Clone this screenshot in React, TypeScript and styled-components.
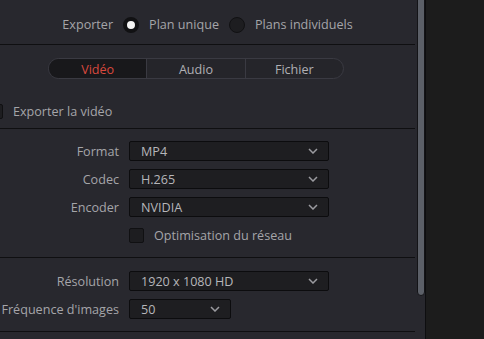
import styled, { createGlobalStyle } from "styled-components";

const GlobalStyle = createGlobalStyle`
  html, body {
    margin: 0;
    padding: 0;
    background: #1c1c1c;
  }
  body {
    font-family: "Open Sans", "Noto Sans", sans-serif;
    font-size: 12.6px;
    color: #a8a8ac;
  }
`;

const Window = styled.div`
  display: flex;
  width: 484px;
  height: 339px;
  overflow: hidden;
  background: #1c1c1c;
`;

const Panel = styled.div`
  display: flex;
  width: 426px;
  flex-shrink: 0;
  background: #28282e;
  border-right: 1px solid #0e0e10;
  box-sizing: border-box;
`;

const Content = styled.div`
  width: 415px;
  flex-shrink: 0;
  overflow: hidden;
`;

const ScrollTrack = styled.div`
  margin-left: 2px;
  width: 8px;
  position: relative;
`;

const Thumb = styled.div`
  position: absolute;
  top: -6px;
  left: 0;
  width: 8px;
  height: 302px;
  box-sizing: border-box;
  background: #5c6068;
  border: 1px solid #141417;
  border-radius: 4px;
`;

const HeaderRow = styled.div`
  display: flex;
  align-items: center;
  justify-content: center;
  gap: 10px;
  height: 45px;
  padding-top: 5px;
  box-sizing: border-box;
  border-bottom: 1px solid #0f0f11;
`;

const Label = styled.span`
  color: #a5a5a9;
  white-space: nowrap;
`;

const Radio = styled.span<{ $checked?: boolean }>`
  width: 16px;
  height: 16px;
  box-sizing: border-box;
  border-radius: 50%;
  background: ${(p) => (p.$checked ? "#f4f4f4" : "#1d1d20")};
  border: ${(p) => (p.$checked ? "4px solid #111113" : "1px solid #111113")};
  flex-shrink: 0;
`;

const Section = styled.div<{ $pt: number; $pb: number }>`
  display: flex;
  flex-direction: column;
  gap: 8px;
  padding: ${(p) => p.$pt}px 0 ${(p) => p.$pb}px;
  border-bottom: 1px solid #0f0f11;
`;

const Tabs = styled.div`
  display: flex;
  width: 296px;
  height: 21px;
  margin-left: 48px;
  box-sizing: border-box;
  border: 1px solid #3a3a42;
  border-radius: 11px;
  overflow: hidden;
  background: #25252a;
`;

const Tab = styled.div<{ $active?: boolean }>`
  flex: 1;
  display: flex;
  align-items: center;
  justify-content: center;
  padding-top: 1px;
  color: ${(p) => (p.$active ? "#d8493e" : "#b0b0b4")};
  background: ${(p) => (p.$active ? "#18181b" : "transparent")};
  & + & {
    border-left: 1px solid #3a3a42;
  }
`;

const CheckRow = styled.div<{ $indent: number; $mt?: number }>`
  display: flex;
  align-items: center;
  gap: 10px;
  height: 20px;
  margin-left: ${(p) => p.$indent}px;
  margin-top: ${(p) => p.$mt ?? 0}px;
`;

const Box = styled.span`
  width: 15px;
  height: 15px;
  box-sizing: border-box;
  background: #1d1d20;
  border: 1px solid #101012;
  border-radius: 2px;
  flex-shrink: 0;
`;

const FieldRow = styled.div`
  display: flex;
  align-items: center;
  gap: 10px;
  height: 20px;
`;

const FieldLabel = styled.span`
  width: 119px;
  text-align: right;
  white-space: nowrap;
  color: #a5a5a9;
  flex-shrink: 0;
`;

const Select = styled.div<{ $w: number }>`
  display: flex;
  align-items: center;
  justify-content: space-between;
  width: ${(p) => p.$w}px;
  height: 20px;
  box-sizing: border-box;
  padding: 0 10px 0 11px;
  background: #1e1e21;
  border: 1px solid #0c0c0e;
  border-radius: 2px;
  color: #b6b6ba;
`;

const Chevron = () => (
  <svg width="10" height="6" viewBox="0 0 10 6">
    <path d="M1 1 L5 5 L9 1" fill="none" stroke="#9b9ba0" strokeWidth="1.5" />
  </svg>
);

const Field = ({ label, value, w = 200 }: { label: string; value: string; w?: number }) => (
  <FieldRow>
    <FieldLabel>{label}</FieldLabel>
    <Select $w={w}>
      <span>{value}</span>
      <Chevron />
    </Select>
  </FieldRow>
);

export default function App() {
  return (
    <>
      <GlobalStyle />
      <Window>
        <Panel>
          <Content>
            <HeaderRow>
              <Label>Exporter</Label>
              <Radio $checked />
              <Label>Plan unique</Label>
              <Radio />
              <Label>Plans individuels</Label>
            </HeaderRow>
            <Section $pt={13} $pb={7}>
              <Tabs>
                <Tab $active>Vidéo</Tab>
                <Tab>Audio</Tab>
                <Tab>Fichier</Tab>
              </Tabs>
              <CheckRow $indent={-12} $mt={14}>
                <Box />
                <Label>Exporter la vidéo</Label>
              </CheckRow>
            </Section>
            <Section $pt={12} $pb={12}>
              <Field label="Format" value="MP4" />
              <Field label="Codec" value="H.265" />
              <Field label="Encoder" value="NVIDIA" />
              <CheckRow $indent={129}>
                <Box />
                <Label>Optimisation du réseau</Label>
              </CheckRow>
            </Section>
            <Section $pt={13} $pb={12}>
              <Field label="Résolution" value="1920 x 1080 HD" />
              <Field label="Fréquence d'images" value="50" w={102} />
            </Section>
          </Content>
          <ScrollTrack>
            <Thumb />
          </ScrollTrack>
        </Panel>
      </Window>
    </>
  );
}
